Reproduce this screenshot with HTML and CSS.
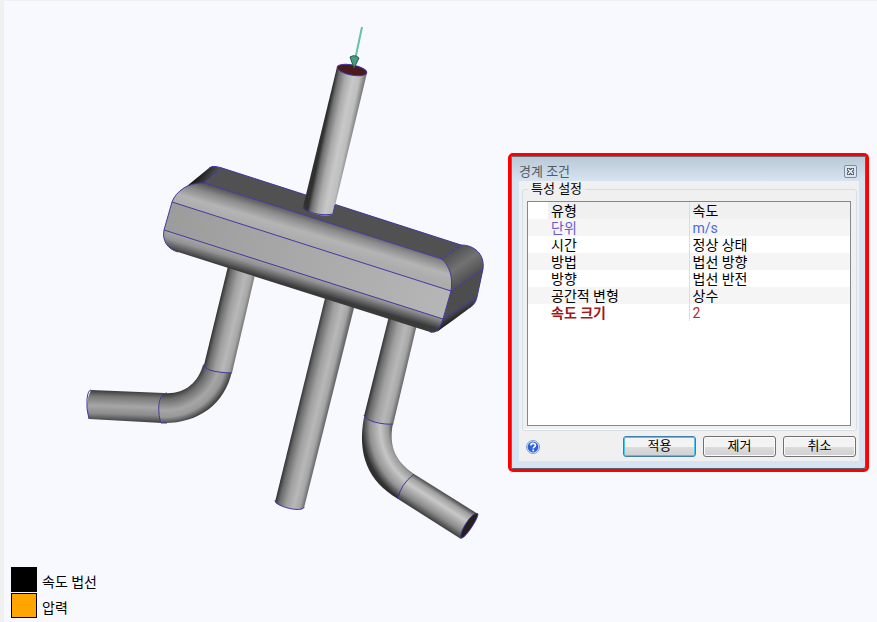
FILE: index.html
```
<!DOCTYPE html>
<html lang="ko">
<head>
  <meta charset="UTF-8" />
  <meta name="viewport" content="width=device-width, initial-scale=1.0" />
  <title>경계 조건</title>
  <link rel="stylesheet" href="styles.css">
</head>
<body>

  <main class="workspace">
    <svg class="model" viewBox="4 1 504 560" role="img" aria-label="매니폴드 모델">
      <defs>
        <linearGradient id="pipe-in" gradientUnits="userSpaceOnUse" x1="337" y1="67" x2="366" y2="73">
          <stop offset="0" stop-color="#303030" /><stop offset=".12" stop-color="#707070" />
          <stop offset=".35" stop-color="#aaaaaa" /><stop offset=".6" stop-color="#c8c8c8" />
          <stop offset=".82" stop-color="#bebebe" /><stop offset="1" stop-color="#7c7c7c" />
        </linearGradient>
        <linearGradient id="pipe-left" gradientUnits="userSpaceOnUse" x1="204" y1="365" x2="233" y2="372">
          <stop offset="0" stop-color="#303030" /><stop offset=".14" stop-color="#6a6a6a" />
          <stop offset=".4" stop-color="#a0a0a0" /><stop offset=".65" stop-color="#b8b8b8" />
          <stop offset=".85" stop-color="#a6a6a6" /><stop offset="1" stop-color="#6a6a6a" />
        </linearGradient>
        <linearGradient id="pipe-mid" href="#pipe-left" x1="275" y1="502" x2="304" y2="509" />
        <linearGradient id="pipe-right" href="#pipe-left" x1="364" y1="417" x2="393" y2="424" />
        <linearGradient id="pipe-out-left" gradientUnits="userSpaceOnUse" x1="127" y1="391" x2="126" y2="422">
          <stop offset="0" stop-color="#383838" /><stop offset=".2" stop-color="#787878" />
          <stop offset=".5" stop-color="#a6a6a6" /><stop offset=".75" stop-color="#8c8c8c" />
          <stop offset="1" stop-color="#3c3c3c" />
        </linearGradient>
        <linearGradient id="pipe-out-right" gradientUnits="userSpaceOnUse" x1="398" y1="499" x2="414" y2="474">
          <stop offset="0" stop-color="#3a3a3a" /><stop offset=".25" stop-color="#8a8a8a" />
          <stop offset=".62" stop-color="#c8c8c8" /><stop offset=".85" stop-color="#a0a0a0" />
          <stop offset="1" stop-color="#505050" />
        </linearGradient>
        <radialGradient id="bend-left" gradientUnits="userSpaceOnUse" cx="165" cy="355" r="69">
          <stop offset=".55" stop-color="#303030" /><stop offset=".64" stop-color="#6c6c6c" />
          <stop offset=".8" stop-color="#a6a6a6" /><stop offset=".9" stop-color="#989898" />
          <stop offset="1" stop-color="#404040" />
        </radialGradient>
        <radialGradient id="bend-right" gradientUnits="userSpaceOnUse" cx="449" cy="427" r="87">
          <stop offset=".65" stop-color="#505050" /><stop offset=".7" stop-color="#9a9a9a" />
          <stop offset=".79" stop-color="#c6c6c6" /><stop offset=".91" stop-color="#929292" />
          <stop offset="1" stop-color="#303030" />
        </radialGradient>
        <linearGradient id="top-round" gradientUnits="userSpaceOnUse" x1="204" y1="183" x2="196" y2="210">
          <stop offset="0" stop-color="#525252" /><stop offset=".3" stop-color="#8a8a8a" />
          <stop offset=".65" stop-color="#b4b4b4" /><stop offset="1" stop-color="#acacac" />
        </linearGradient>
        <linearGradient id="front" gradientUnits="userSpaceOnUse" x1="168" y1="216" x2="447" y2="305">
          <stop offset="0" stop-color="#9c9c9c" /><stop offset="1" stop-color="#b6b6b6" />
        </linearGradient>
        <linearGradient id="bottom-round" gradientUnits="userSpaceOnUse" x1="164" y1="230" x2="159" y2="247">
          <stop offset="0" stop-color="#a8a8a8" /><stop offset=".4" stop-color="#949494" />
          <stop offset="1" stop-color="#3a3a3a" />
        </linearGradient>
        <linearGradient id="left-round" gradientUnits="userSpaceOnUse" x1="199" y1="174" x2="210" y2="182">
          <stop offset="0" stop-color="#161616" /><stop offset="1" stop-color="#525252" />
        </linearGradient>
        <linearGradient id="right-round" gradientUnits="userSpaceOnUse" x1="452" y1="252" x2="470" y2="278">
          <stop offset="0" stop-color="#525252" /><stop offset=".5" stop-color="#727272" />
          <stop offset="1" stop-color="#505050" />
        </linearGradient>
        <linearGradient id="end-round" gradientUnits="userSpaceOnUse" x1="458" y1="308" x2="463" y2="316">
          <stop offset="0" stop-color="#525252" /><stop offset="1" stop-color="#181818" />
        </linearGradient>
      </defs>

      <!-- outlet pipes -->
      <path fill="url(#bend-left)" d="M203 365 232 371C225 405 197 424 162 423Q155 407 163 393C184 395 198 383 203 365Z" />
      <path fill="url(#pipe-left)" d="M229 262 258 262 232 373Q206 372 204 365Z" />
      <path fill="url(#pipe-out-left)" d="M91 390 164 393Q155 407 162 423L89 419Q84 404 91 390Z" />
      <path fill="url(#pipe-mid)" d="M327 290 356 300 304 508Q300 511 288 508T275 502Z" />
      <path fill="url(#bend-right)" d="M364 417 393 423C388 448 397 462 414 474L398 499C368 481 357 455 364 417Z" />
      <path fill="url(#pipe-right)" d="M390 312 418 320 393 425Q369 424 364 416Z" />
      <path fill="url(#pipe-out-right)" d="M414 474 478 514 461 539 398 499Q401 485 414 474Z" />
      <path class="end-cap" d="M478 514C475 512 470 517 465 525S460 539 462 538C466 537 478 519 478 514Z" />
      <g class="edges">
        <path d="M204 364Q203 372 232 373M91 390Q88 390 87 399T89 419M167 393C158 394 157 410 161 423H167" />
        <path d="M275 500C275 507 303 513 304 507M364 415C365 421 383 425 393 424M414 474Q400 485 398 499" />
      </g>

      <!-- manifold body -->
      <path fill="#515151" d="M204 183 222 168 461 245 442 259Z" />
      <path fill="url(#left-round)" d="M187 186 209 168 213 166 222 168 204 183Z" />
      <path fill="url(#top-round)" d="M204 183 442 259C450 267 453 277 451 291L172 202C176 191 189 182 204 183Z" />
      <path fill="url(#front)" d="M172 202 451 291 443 320 164 230Z" />
      <path fill="url(#bottom-round)" d="M164 230 443 319C440 330 437 333 430 332L178 252C167 249 162 240 164 230Z" />
      <path fill="url(#right-round)" d="M442 259 461 245C474 245 485 254 483 269L451 291C453 277 450 267 442 259Z" />
      <path fill="#4d4d4d" d="M451 291 483 269 477 297 443 320Z" />
      <path fill="url(#end-round)" d="M443 319 477 297C475 306 471 307 437 332Z" />
      <g class="edges">
        <path d="M209 168Q213 165 222 168L461 245C474 245 485 254 483 269L477 297C475 305 472 306 469 308" />
        <path d="M222 168 204 183 442 259 461 245M172 202 451 291 483 269M164 230 443 319 477 297" />
        <path d="M204 183C189 182 176 191 172 202L164 230C162 240 167 249 178 252M442 259C450 267 453 277 451 291L443 319C440 330 437 333 430 332" />
      </g>

      <!-- inlet pipe -->
      <path fill="url(#pipe-in)" d="M337 67 367 73 333 214Q327 217 315 214T303 207Z" />
      <path class="edges" d="M304 205C301 209 315 217 333 214L335 205" />
      <ellipse class="inlet" cx="352" cy="70" rx="15" ry="5" transform="rotate(11 352 70)" />
      <path class="arrow-line" d="M362 27 355 60" />
      <path class="arrow-head" d="M350 57Q355 54 359 58L354 68Z" />
    </svg>

    <form class="dialog" aria-labelledby="dialog-title">
      <div class="titlebar">
        <h1 id="dialog-title">경계 조건</h1>
        <button class="close" type="button" aria-label="닫기">
          <svg viewBox="0 0 11 11">
            <path d="M2 2H5L5.5 3 6 2H9V4.5L8 5.5 9 6.5V9H6L5.5 8 5 9H2V6.5L3 5.5 2 4.5Z" fill="#4a5568" />
            <path d="M3 3 8 8M8 3 3 8" stroke="#fff" stroke-width="1.3" />
          </svg>
        </button>
      </div>
      <div class="content">
        <fieldset class="group">
          <legend>특성 설정</legend>
          <div class="list">
            <table class="properties">
              <tr class="selected"><th scope="row">유형</th><td>속도</td></tr>
              <tr class="unit"><th scope="row">단위</th><td>m/s</td></tr>
              <tr><th scope="row">시간</th><td>정상 상태</td></tr>
              <tr><th scope="row">방법</th><td>법선 방향</td></tr>
              <tr><th scope="row">방향</th><td>법선 반전</td></tr>
              <tr><th scope="row">공간적 변형</th><td>상수</td></tr>
              <tr class="changed"><th scope="row">속도 크기</th><td>2</td></tr>
            </table>
          </div>
        </fieldset>
        <div class="actions">
          <button class="help" type="button" aria-label="도움말">
            <svg viewBox="0 0 14 14">
              <circle cx="7" cy="7" r="6.5" fill="#e6eefb" stroke="#7f9cd2" />
              <circle cx="7" cy="7" r="5.4" fill="#2a62d8" />
              <path d="M4.8 5.6C4.800 2.600 9.400 2.800 9.400 5.300 9.400 7 7.200 6.800 7.200 8.600M7.200 9.600V11.200" fill="none" stroke="#fff" stroke-width="1.7" />
            </svg>
          </button>
          <button class="btn default" type="button">적용</button>
          <button class="btn" type="button">제거</button>
          <button class="btn" type="button">취소</button>
        </div>
      </div>
    </form>
  </main>

  <ul class="key">
    <li><span class="swatch velocity"></span>속도 법선</li>
    <li><span class="swatch pressure"></span>압력</li>
  </ul>

</body>
</html>
```
FILE: styles.css
```
:root {
  --face: #f0f0f0;
  --frame: #d7e3f1;
  --canvas: #f8f9ff;
  --edge: #4136a0;
}

* {
  box-sizing: border-box;
}

body {
  margin: 0;
  min-height: 100vh;
  display: flex;
  flex-direction: column;
  justify-content: space-between;
  border-left: 4px solid var(--face);
  border-top: 1px solid var(--face);
  background-color: var(--canvas);
  color: #000;
  font-family: Roboto, "Noto Sans CJK KR", sans-serif;
  font-size: 14px;
}

.workspace {
  display: grid;
  grid-template-columns: minmax(0, 1fr) 361px;
  align-items: start;
  padding-right: 8px;
}

/* 3D model */
.model {
  display: block;
  width: 100%;
}

.edges {
  fill: none;
  stroke: var(--edge);
  stroke-width: 1;
}

.end-cap {
  fill: #251f22;
  stroke: var(--edge);
}

.inlet {
  fill: #4a1a1c;
  stroke: var(--edge);
}

.arrow-line {
  stroke: #66c4a4;
  stroke-width: 2;
}

.arrow-head {
  fill: #479b80;
  stroke: #245c4a;
}

/* dialog */
.dialog {
  margin-top: 152px;
  padding: 0 7px 8px 8px;
  border: 3px solid #f00;
  border-radius: 5px;
  background-color: var(--frame);
  box-shadow: inset 1px 1px #66707c, inset -1px -1px #59616b;
}

.titlebar {
  display: flex;
  align-items: center;
  justify-content: space-between;
  height: 25px;
  margin: 0 -6px 0 -7px;
  padding: 5px 8px 0 7px;
  border-top: 1px solid #66707c;
  background: linear-gradient(#b9c9d6, var(--frame));
}

.titlebar h1 {
  margin: 0;
  color: #555b63;
  font-size: 13px;
  font-weight: normal;
  line-height: 18px;
}

.close {
  width: 13px;
  height: 13px;
  padding: 0;
  border: 1px solid #7d8ba4;
  border-radius: 2px;
  background-color: #dce5ef;
}

.close svg {
  display: block;
}

.content {
  padding: 0 2px 4px 3px;
  background-color: var(--face);
}

.group {
  min-width: 0;
  margin: 0;
  padding: 4px 5px 4px 4px;
  border: 1px solid #d5dfe5;
  border-radius: 3px;
  box-shadow: inset 0 -1px #fff;
}

.group legend {
  margin-left: 1px;
  padding: 0 3px;
  font-size: 13px;
  line-height: 16px;
}

.list {
  height: 225px;
  border: 1px solid #828790;
  background-color: #fff;
}

.properties {
  width: 100%;
  border-collapse: collapse;
  table-layout: fixed;
}

.properties tr:nth-child(even) {
  background-color: #f5f5f5;
}

.properties th,
.properties td {
  height: 17px;
  padding: 2px 0 0 3px;
  font-weight: normal;
  line-height: 15px;
  text-align: left;
}

.properties th {
  width: 50%;
  padding-left: 23px;
  border-right: 1px solid #dcdcdc;
}

.properties .selected {
  background: linear-gradient(90deg, #fff 20px, #f0f0f0 20px);
}

.properties .unit {
  color: #4b69e0;
}

.properties .unit th {
  color: #6a5acd;
}

.properties .changed {
  color: #b5281c;
}

.properties .changed th {
  color: #a01818;
  font-weight: bold;
}

.actions {
  display: flex;
  align-items: center;
  gap: 7px;
  padding: 5px 1px 0 0;
}

.help {
  width: 14px;
  height: 14px;
  margin: 0 auto 0 4px;
  padding: 0;
  border: 0;
  background: none;
}

.help svg {
  display: block;
}

.btn {
  width: 73px;
  height: 21px;
  padding: 0 0 2px;
  border: 1px solid #707070;
  border-radius: 3px;
  background: linear-gradient(#f3f3f3 50%, #dddddd 50%, #d0d0d0);
  box-shadow: inset 0 0 0 1px #fbfbfb;
  color: #000;
  font-family: inherit;
  font-size: 13px;
  line-height: 17px;
}

.btn.default {
  border-color: #3c7fb1;
  box-shadow: inset 0 0 0 1px #48c8ee;
}

/* colour key */
.key {
  margin: 0;
  padding: 0 0 3px 7px;
  list-style: none;
}

.key li {
  display: flex;
  gap: 5px;
  height: 26px;
  line-height: 30px;
}

.swatch {
  width: 26px;
  height: 25px;
  border: 1px solid #000;
}

.velocity {
  background-color: #000;
}

.pressure {
  background-color: #ffa500;
}
```
